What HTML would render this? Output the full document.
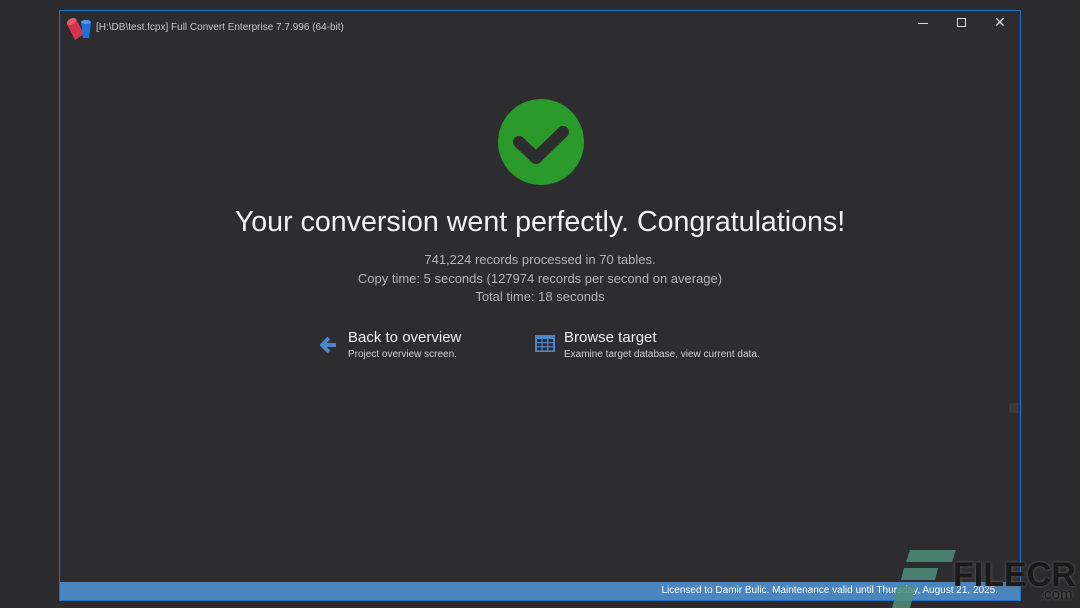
<!DOCTYPE html>
<html><head><meta charset="utf-8"><style>
body{margin:0;width:1080px;height:608px;background:#2b2b2d;position:relative;overflow:hidden;font-family:"Segoe UI","Liberation Sans",sans-serif;color:#e6e6e6}
.win{position:absolute;left:59px;top:10px;width:960px;height:589px;border:1px solid #1f74c9;background:#2d2d30}
.t{position:absolute;white-space:nowrap}
.status{position:absolute;left:0;top:571px;width:960px;height:18px;background:#4a86bd;color:#fff;font-size:10px;line-height:18px;text-align:right;box-sizing:border-box;padding-right:22px}
</style></head><body>
<div class="win">
<svg class="t" style="left:4px;top:5px" width="30" height="26" viewBox="0 0 30 26">
<path d="M3 8 L12 3 L20 18 L11 24 Z" fill="#d6334a"/><ellipse cx="7.5" cy="5.5" rx="5" ry="3" transform="rotate(-30 7.5 5.5)" fill="#e85a6a"/>
<path d="M17 6 L27 6 L25 22 L19 22 Z" fill="#1e6fe0"/><ellipse cx="22" cy="6" rx="5" ry="2" fill="#4d9bf0"/>
</svg>
<div class="t" style="left:36px;top:11px;font-size:10px;color:#c8c8c8">[H:\DB\test.fcpx] Full Convert Enterprise 7.7.996 (64-bit)</div>
<div class="t" style="left:858px;top:12px;width:10px;height:1px;background:#ddd"></div>
<div class="t" style="left:897px;top:7px;width:7px;height:7px;border:1px solid #ddd"></div>
<div class="t" style="left:934px;top:3px;font-size:14px;color:#ddd">✕</div>
<svg class="t" style="left:437px;top:87px" width="88" height="88" viewBox="0 0 88 88">
<circle cx="44" cy="44" r="43" fill="#2a9a2a"/>
<path d="M22 44 L39 60 L66 34" stroke="#2d2d30" stroke-width="12" stroke-linecap="round" stroke-linejoin="round" fill="none"/>
</svg>
<div class="t" style="left:0;width:960px;text-align:center;top:195px;font-size:28.6px;color:#f2f2f2">Your conversion went perfectly. Congratulations!</div>
<div class="t" style="left:0;width:960px;text-align:center;top:240px;font-size:13px;line-height:18.5px;color:#b4b4b4">741,224 records processed in 70 tables.<br>Copy time: 5 seconds (127974 records per second on average)<br>Total time: 18 seconds</div>
<svg class="t" style="left:259px;top:324px" width="20" height="20" viewBox="0 0 20 20"><path d="M17 10 H4 M10 3 L3 10 L10 17" stroke="#4a86c8" stroke-width="4" fill="none" stroke-linejoin="round"/></svg>
<div class="t" style="left:288px;top:318px;font-size:15px;color:#f0f0f0">Back to overview</div>
<div class="t" style="left:288px;top:338px;font-size:10px;color:#d0d0d0">Project overview screen.</div>
<svg class="t" style="left:475px;top:324px" width="20" height="17" viewBox="0 0 20 17"><rect x="0" y="0" width="20" height="17" fill="#4a86c8"/><g fill="#2d2d30"><rect x="2" y="4" width="4.5" height="3"/><rect x="7.7" y="4" width="4.5" height="3"/><rect x="13.5" y="4" width="4.5" height="3"/><rect x="2" y="8.2" width="4.5" height="3"/><rect x="7.7" y="8.2" width="4.5" height="3"/><rect x="13.5" y="8.2" width="4.5" height="3"/><rect x="2" y="12.4" width="4.5" height="3"/><rect x="7.7" y="12.4" width="4.5" height="3"/><rect x="13.5" y="12.4" width="4.5" height="3"/></g></svg>
<div class="t" style="left:504px;top:318px;font-size:15px;color:#f0f0f0">Browse target</div>
<div class="t" style="left:504px;top:338px;font-size:10px;color:#d0d0d0">Examine target database, view current data.</div>
<div class="t" style="left:949px;top:392px;width:10px;height:10px;background:#3a3a3d"></div>
<div class="status">Licensed to Damir Bulic. Maintenance valid until Thursday, August 21, 2025.</div>
</div>
<svg class="t" style="left:880px;top:548px" width="80" height="60" viewBox="0 0 80 60"><path d="M30 2 H76 L72 14 H26 Z M24 20 H58 L55 32 H21 Z M18 38 H36 L30 60 H12 Z" fill="#4f8f78" opacity="0.85"/></svg>
<div class="t" style="left:953px;top:556px;font-size:34px;font-weight:bold;color:#1a1a1a;text-shadow:0 0 3px #666">FILECR</div>
<div class="t" style="left:1040px;top:586px;font-size:15px;color:#1a1a1a;text-shadow:0 0 3px #777">.com</div>
</body></html>
